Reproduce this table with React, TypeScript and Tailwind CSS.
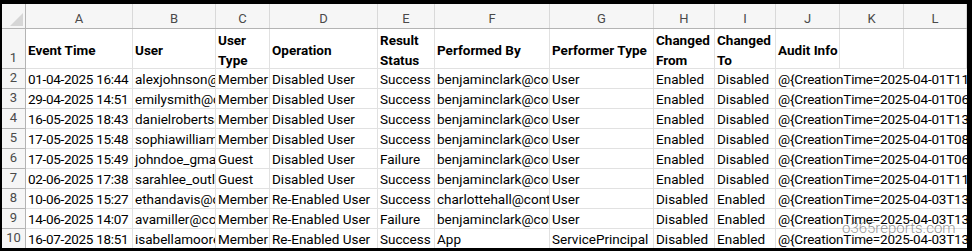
import React from "react";

type Row = {
  n: number;
  time: string;
  user: string;
  type: string;
  op: string;
  status: string;
  by: string;
  byType: string;
  from: string;
  to: string;
  audit: string;
};

const rows: Row[] = [
  { n: 2, time: "01-04-2025 16:44", user: "alexjohnson@contoso.com", type: "Member", op: "Disabled User", status: "Success", by: "benjaminclark@contoso.com", byType: "User", from: "Enabled", to: "Disabled", audit: "@{CreationTime=2025-04-01T11:02:17; Id=3f1c; Operation=Update user.}" },
  { n: 3, time: "29-04-2025 14:51", user: "emilysmith@contoso.com", type: "Member", op: "Disabled User", status: "Success", by: "benjaminclark@contoso.com", byType: "User", from: "Enabled", to: "Disabled", audit: "@{CreationTime=2025-04-01T06:41:09; Id=7a2e; Operation=Update user.}" },
  { n: 4, time: "16-05-2025 18:43", user: "danielroberts@contoso.com", type: "Member", op: "Disabled User", status: "Success", by: "benjaminclark@contoso.com", byType: "User", from: "Enabled", to: "Disabled", audit: "@{CreationTime=2025-04-01T13:15:52; Id=9b4d; Operation=Update user.}" },
  { n: 5, time: "17-05-2025 15:48", user: "sophiawilliams@contoso.com", type: "Member", op: "Disabled User", status: "Success", by: "benjaminclark@contoso.com", byType: "User", from: "Enabled", to: "Disabled", audit: "@{CreationTime=2025-04-01T08:27:33; Id=1c8f; Operation=Update user.}" },
  { n: 6, time: "17-05-2025 15:49", user: "johndoe_gmail.com#EXT#@contoso.com", type: "Guest", op: "Disabled User", status: "Failure", by: "benjaminclark@contoso.com", byType: "User", from: "Enabled", to: "Disabled", audit: "@{CreationTime=2025-04-01T06:58:04; Id=5e0a; Operation=Update user.}" },
  { n: 7, time: "02-06-2025 17:38", user: "sarahlee_outlook.com#EXT#@contoso.com", type: "Guest", op: "Disabled User", status: "Success", by: "benjaminclark@contoso.com", byType: "User", from: "Enabled", to: "Disabled", audit: "@{CreationTime=2025-04-01T11:44:21; Id=2d6b; Operation=Update user.}" },
  { n: 8, time: "10-06-2025 15:27", user: "ethandavis@contoso.com", type: "Member", op: "Re-Enabled User", status: "Success", by: "charlottehall@contoso.com", byType: "User", from: "Disabled", to: "Enabled", audit: "@{CreationTime=2025-04-03T13:09:45; Id=8f3c; Operation=Update user.}" },
  { n: 9, time: "14-06-2025 14:07", user: "avamiller@contoso.com", type: "Member", op: "Re-Enabled User", status: "Failure", by: "benjaminclark@contoso.com", byType: "User", from: "Disabled", to: "Enabled", audit: "@{CreationTime=2025-04-03T13:36:12; Id=4a7e; Operation=Update user.}" },
  { n: 10, time: "16-07-2025 18:51", user: "isabellamoore@contoso.com", type: "Member", op: "Re-Enabled User", status: "Success", by: "App", byType: "ServicePrincipal", from: "Disabled", to: "Enabled", audit: "@{CreationTime=2025-04-03T13:52:30; Id=6c1d; Operation=Update user.}" },
];

const letters = ["A", "B", "C", "D", "E", "F", "G", "H", "I", "J", "K", "L"];

const headers = [
  "Event Time",
  "User",
  "User Type",
  "Operation",
  "Result Status",
  "Performed By",
  "Performer Type",
  "Changed From",
  "Changed To",
  "Audit Info",
  "",
  "",
];

// row-number column, A..K fixed, L takes the rest
const cols = "grid grid-cols-[24px_107px_83px_54px_108px_57px_115px_104px_61px_61px_64px_64px_1fr]";

function DataCell({ children, tight = false }: { children: React.ReactNode; tight?: boolean }) {
  return (
    <div
      className={
        tight
          ? "h-[20px] border-b border-r border-[#e1e1e1] overflow-hidden whitespace-nowrap pl-[2px] leading-[20px] tracking-[-0.3px]"
          : "h-[20px] border-b border-r border-[#e1e1e1] overflow-hidden whitespace-nowrap pl-[2px] leading-[20px]"
      }
    >
      {children}
    </div>
  );
}

export default function App() {
  return (
    <div
      className="relative w-[972px] h-[251px] overflow-hidden border-t-[4px] border-l-[2px] border-r-[5px] border-b-[3px] border-black bg-white text-[13.5px] text-black"
      style={{ fontFamily: "Roboto, 'Liberation Sans', sans-serif" }}
    >
      {/* column letters */}
      <div className={`${cols} h-[25px] bg-[#f6f6f6] border-b border-[#b4b4b4] text-[#4a4a4a] text-[13px]`}>
        <div className="relative border-r border-[#b4b4b4]">
          <div className="absolute right-[2px] bottom-[2px] w-0 h-0 border-l-[13px] border-l-transparent border-b-[13px] border-b-[#d6d6d6]" />
        </div>
        {letters.map((l) => (
          <div key={l} className="flex items-center justify-center border-r border-[#d9d9d9] pt-[5px] leading-[18px]">
            {l}
          </div>
        ))}
      </div>

      {/* header row */}
      <div className={`${cols} h-[40px]`}>
        <div className="flex items-end justify-center border-r border-b border-[#b4b4b4] bg-[#f6f6f6] text-[#4a4a4a] text-[13px] leading-[20px]">
          1
        </div>
        {headers.map((h, i) => (
          <div
            key={i}
            className="flex items-center border-r border-b border-[#e1e1e1] pl-[2px] pt-[2px] font-bold leading-[20px] overflow-hidden"
          >
            <span className="w-full">{h}</span>
          </div>
        ))}
      </div>

      {/* data rows */}
      {rows.map((r) => (
        <div key={r.n} className={cols}>
          <div className="h-[20px] flex items-end justify-center border-r border-b border-[#b4b4b4] bg-[#f6f6f6] text-[#4a4a4a] text-[13px] leading-[20px]">
            {r.n}
          </div>
          <DataCell tight>{r.time}</DataCell>
          <DataCell>{r.user}</DataCell>
          <DataCell>{r.type}</DataCell>
          <DataCell>{r.op}</DataCell>
          <DataCell>{r.status}</DataCell>
          <DataCell>{r.by}</DataCell>
          <DataCell>{r.byType}</DataCell>
          <DataCell>{r.from}</DataCell>
          <DataCell>{r.to}</DataCell>
          <div className="col-span-3 h-[20px] border-b border-[#e1e1e1] overflow-hidden whitespace-nowrap pl-[2px] leading-[20px] tracking-[-0.2px]">
            {r.audit}
          </div>
        </div>
      ))}

      {/* site watermark */}
      <div className="absolute left-[840px] top-[217px] text-[15px] leading-[15px] font-light text-[#6b6b6b]/70 pointer-events-none">
        o365reports.com
      </div>
    </div>
  );
}
